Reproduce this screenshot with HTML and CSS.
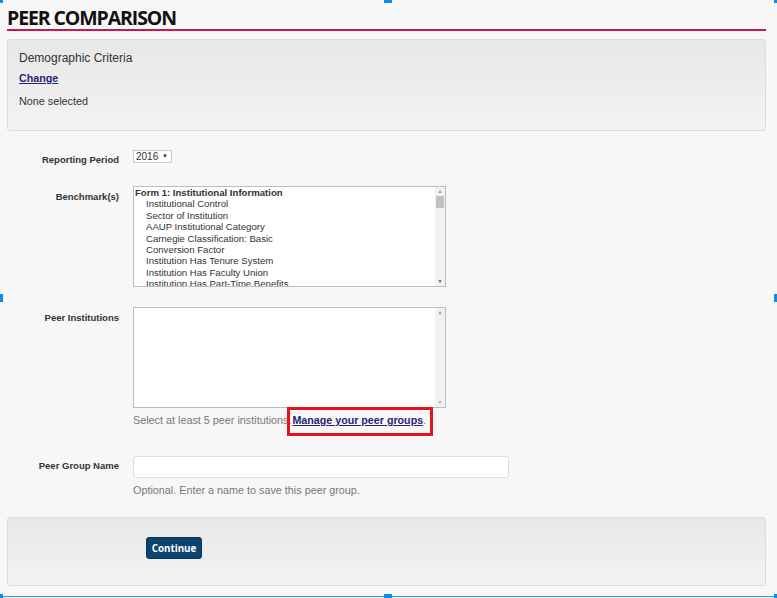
FILE: index.html
```html
<!DOCTYPE html>
<html>
<head>
<meta charset="utf-8">
<link rel="stylesheet" href="styles.css">
</head>
<body>
<div class="page">
  <h1 class="title">PEER COMPARISON</h1>
  <div class="panel criteria">
    <div class="crit-title">Demographic Criteria</div>
    <a class="link" href="#">Change</a>
    <div class="crit-none">None selected</div>
  </div>

  <div class="form">
    <div class="row row-period">
      <div class="label">Reporting Period</div>
      <div class="field"><span class="select">2016 <span class="caret">▼</span></span></div>
    </div>
    <div class="row row-bench">
      <div class="label">Benchmark(s)</div>
      <div class="field">
        <div class="listbox">
          <div class="list-items">
            <div class="grp">Form 1: Institutional Information</div>
            <div class="opt">Institutional Control</div>
            <div class="opt">Sector of Institution</div>
            <div class="opt">AAUP Institutional Category</div>
            <div class="opt">Carnegie Classification: Basic</div>
            <div class="opt">Conversion Factor</div>
            <div class="opt">Institution Has Tenure System</div>
            <div class="opt">Institution Has Faculty Union</div>
            <div class="opt">Institution Has Part-Time Benefits</div>
          </div>
          <div class="scrollbar"><span class="arr up">▲</span><span class="thumb"></span><span class="arr down">▼</span></div>
        </div>
      </div>
    </div>
    <div class="row row-peers">
      <div class="label">Peer Institutions</div>
      <div class="field">
        <div class="listbox">
          <div class="list-items"></div>
          <div class="scrollbar"><span class="arr up">▲</span><span class="arr down">▼</span></div>
        </div>
        <div class="help">Select at least 5 peer institutions. <span class="highlight"><a class="link" href="#">Manage your peer groups</a></span>.</div>
      </div>
    </div>
    <div class="row row-name">
      <div class="label">Peer Group Name</div>
      <div class="field">
        <div class="textbox"></div>
        <div class="help help-name">Optional. Enter a name to save this peer group.</div>
      </div>
    </div>
  </div>

  <div class="panel actions">
    <button class="btn">Continue</button>
  </div>
</div>
<div class="handle h-tl"></div>
<div class="handle h-tm"></div>
<div class="handle h-tr"></div>
<div class="handle h-ml"></div>
<div class="handle h-mr"></div>
<div class="sel-bottom"></div>
<div class="handle h-bl"></div>
<div class="handle h-bm"></div>
<div class="handle h-br"></div>
</body>
</html>
```

FILE: styles.css
```css
html, body { margin: 0; padding: 0; }
body {
  background: #f7f7f7;
  font-family: "Liberation Sans", Arial, sans-serif;
  color: #333;
  width: 777px;
  height: 598px;
  overflow: hidden;
  position: relative;
}
.page { padding: 7px 11px 0 7px; }
.title {
  margin: 0;
  font-family: "Open Sans", sans-serif;
  font-weight: 700;
  font-size: 19.5px;
  line-height: 21px;
  color: #111;
  letter-spacing: -1.1px;
  padding-bottom: 1px;
  border-bottom: 2px solid #c8174d;
}
.panel {
  background: linear-gradient(#e7e7e7, #f3f3f3);
  border: 1px solid #dcdcdc;
  border-radius: 3px;
  box-sizing: border-box;
}
.criteria {
  margin-top: 8px;
  height: 92px;
  padding: 11px 12px 0 11px;
}
.crit-title { font-size: 12px; line-height: 14px; color: #333; }
.link {
  color: #262672;
  font-weight: 700;
  text-decoration: underline;
}
.criteria .link { display: inline-block; font-size: 10.7px; margin-top: 7px; line-height: 13px; }
.crit-none { font-size: 10.8px; margin-top: 9px; line-height: 13px; color: #333; }

.form { padding-top: 19px; }
.row { display: flex; }
.label {
  width: 112px;
  text-align: right;
  font-size: 9.5px;
  line-height: 10px;
  font-weight: 700;
  color: #333;
  padding-right: 14px;
  box-sizing: content-box;
}
.field { display: flex; flex-direction: column; align-items: flex-start; }
.row-period .label { padding-top: 5px; }
.select {
  display: inline-block;
  background: #fff;
  border: 1px solid #ccc;
  font-size: 10px;
  line-height: 11px;
  padding: 0 3px 0 2px;
  color: #333;
}
.caret { font-size: 6px; vertical-align: 2px; margin-left: 1px; }
.row-bench { margin-top: 21px; }
.row-bench .label { padding-top: 6px; }
.listbox {
  width: 313px;
  height: 101px;
  box-sizing: border-box;
  background: #fff;
  border: 1px solid #bdbdbd;
  display: flex;
  overflow: hidden;
}
.list-items { flex: 1; padding: 0 0 0 1px; font-size: 9.6px; line-height: 11.4px; color: #333; }
.grp { font-weight: 700; }
.opt { padding-left: 11px; }
.scrollbar {
  width: 10px;
  background: #f1f1f1;
  position: relative;
  display: flex;
  flex-direction: column;
  align-items: center;
}
.arr { font-size: 5px; color: #999; line-height: 9px; height: 9px; }
.thumb { width: 8px; height: 12px; background: #c1c1c1; }
.arr.down { margin-top: auto; color: #555; }
.row-peers .arr.down { color: #aaa; }
.row-peers { margin-top: 20px; }
.row-peers .label { padding-top: 6px; }
.help { font-size: 10.8px; color: #777; margin-top: 5px; line-height: 14px; }
.highlight {
  display: inline-block;
  outline: 3px solid #e3141f;
  outline-offset: 0;
  padding: 3px 7px 6px 2px;
  margin: -3px -7px -6px -4px;
}
.row-peers .help .link { font-size: 10.7px; }
.row-name { margin-top: 29px; }
.row-name .label { padding-top: 5px; }
.textbox {
  width: 376px;
  height: 22px;
  box-sizing: border-box;
  background: #fff;
  border: 1px solid #ddd;
  border-radius: 3px;
}
.help-name { margin-top: 5px; }
.actions {
  margin-top: 20px;
  height: 69px;
  padding: 19px 0 0 138px;
}
.btn {
  background: #0c4470;
  color: #fff;
  border: 1px solid #093457;
  border-radius: 3px;
  font-family: "Open Sans", sans-serif;
  font-weight: 700;
  font-size: 9.8px;
  height: 22px;
  width: 56px;
  padding: 0;
}
.handle { position: absolute; background: #0a8cf0; }
.h-tl { left: 0; top: 0; width: 3px; height: 3px; }
.h-tm { left: 384px; top: 0; width: 8px; height: 3px; }
.h-tr { left: 774px; top: 0; width: 3px; height: 3px; }
.h-ml { left: 0; top: 294px; width: 3px; height: 8px; }
.h-mr { left: 774px; top: 294px; width: 3px; height: 8px; }
.sel-bottom { position: absolute; left: 0; top: 596px; width: 777px; height: 1px; background: #2a9af0; }
.h-bl { left: 0; top: 594px; width: 3px; height: 4px; }
.h-bm { left: 384px; top: 594px; width: 8px; height: 4px; }
.h-br { left: 774px; top: 594px; width: 3px; height: 4px; }
```
